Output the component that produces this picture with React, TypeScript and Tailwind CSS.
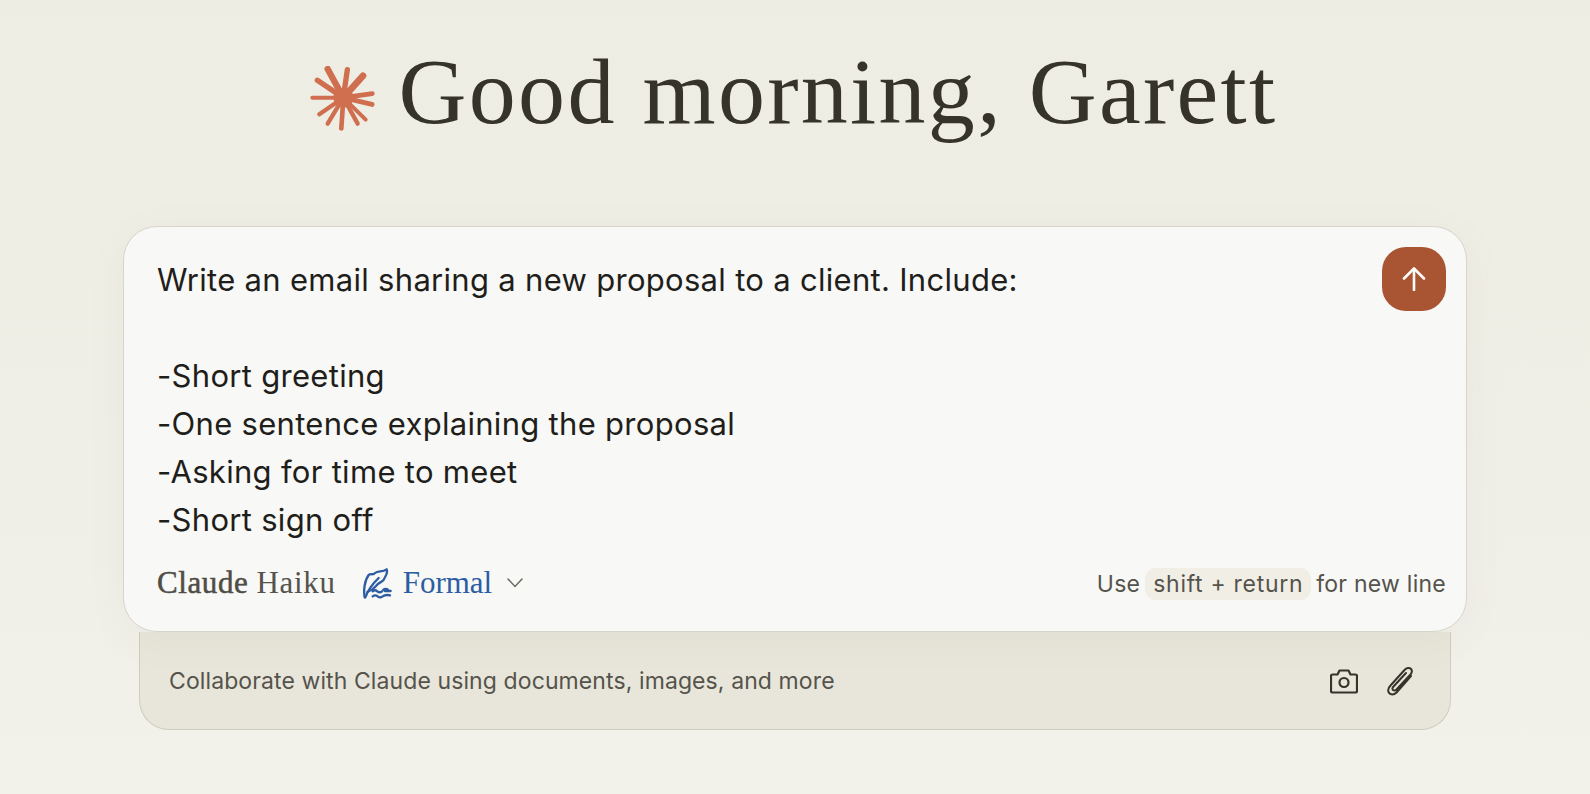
const LINES = [
  "Write an email sharing a new proposal to a client. Include:",
  "",
  "-Short greeting",
  "-One sentence explaining the proposal",
  "-Asking for time to meet",
  "-Short sign off",
];

// crop-space coordinates of the hand drawn burst, as tapered spokes
const RAYS: [number, number, number][] = [
  [78, 44, 19],
  [137, 46, 16],
  [184, 64, 20],
  [212, 118, 14],
  [211, 150, 15],
  [192, 196, 12],
  [168, 208, 13],
  [119, 222, 14],
  [78, 208, 13],
  [53, 180, 13],
  [32, 130, 12],
  [47, 78, 16],
];

function Burst() {
  return (
    <svg viewBox="25 35 195 195" className="mt-[27px] h-[65px] w-[65px] shrink-0" aria-hidden>
      {RAYS.map(([x, y, w]) => (
        <line key={`${x}-${y}`} x1="125" y1="130" x2={x} y2={y} stroke="#cf6f4f" strokeWidth={w} strokeLinecap="round" />
      ))}
      <circle cx="125" cy="130" r="30" fill="#cf6f4f" />
    </svg>
  );
}

function FormalIcon() {
  return (
    <svg viewBox="55 15 90 93" className="h-[31px] w-[30px] shrink-0" fill="none" stroke="#2c5da3" strokeWidth="7" strokeLinecap="round" strokeLinejoin="round" aria-hidden>
      <path d="M60 103C56 82 60 52 72 36C80 30 84 38 91 30C101 21 112 29 126 19C131 33 120 41 118 49C110 60 101 58 95 68C88 76 78 83 68 87" />
      <path d="M62 103C70 82 84 62 102 45" />
      <path d="M84 85q7 -6 14 0t14 0" />
      <path d="M116 80q7 -5 14 0 M120 84h18" />
      <path d="M84 100q8 -6 15 0t15 0t22 -3" />
    </svg>
  );
}

function CameraIcon() {
  return (
    <svg viewBox="0 0 28 25" className="h-[25px] w-[28px]" fill="none" stroke="#35332a" strokeWidth="2.2" strokeLinejoin="round" aria-hidden>
      <path d="M2.5 5.5H7.5L9.5 1.5H18.5L20.5 5.5H25.5Q27 5.5 27 7V22Q27 23.5 25.5 23.5H2.5Q1 23.5 1 22V7Q1 5.5 2.5 5.5Z" />
      <circle cx="14" cy="13.5" r="4.5" />
    </svg>
  );
}

function ClipIcon() {
  return (
    <svg viewBox="0 0 26 29" className="h-[29px] w-[26px]" fill="none" stroke="#35332a" strokeWidth="2" strokeLinecap="round" strokeLinejoin="round" aria-hidden>
      <path d="M24 9L9.5 25.5C7 28 3 28 1.8 25.5C0.5 23 1.5 20.5 3.5 18.5L17.5 3C19.5 0.8 22.5 0.5 24 2C25.5 3.5 25 6 23 8L9.5 22.5C8.5 23.5 7 23.8 6 23C5 22 5.5 20.5 6.5 19.5L19 6" />
    </svg>
  );
}

export default function App() {
  return (
    <div className="flex h-[794px] w-[1590px] flex-col items-center overflow-hidden bg-[#f1f0e8] bg-gradient-to-b from-[#eeede3] to-[#f2f1ea] font-['Inter',sans-serif]">
      <h1 className="mt-[39px] flex h-[104px] items-start gap-[24px] pr-[3px] font-['Liberation_Serif',serif] text-[94px] leading-[104px] tracking-[2.3px] text-[#35332a]">
        <Burst />
        <span>Good morning, Garett</span>
      </h1>

      <div className="relative z-10 mt-[83px] flex h-[406px] w-[1344px] flex-col rounded-[34px] border border-[#d6d5cb] bg-[#f8f8f6] pl-[33px] pr-[20px] shadow-[0_8px_40px_rgba(120,110,80,0.06)]">
        <div className="flex items-start justify-between">
          <div className="pt-[29px] text-[31px] leading-[48px] tracking-[0.3px] text-[#1f1e1b]">
            {LINES.map((line, i) => (
              <div key={i} className="h-[48px] whitespace-pre">
                {line}
              </div>
            ))}
          </div>
          <button className="mt-[20px] flex h-[64px] w-[64px] items-center justify-center rounded-[24px] bg-[#a95533]">
            <svg viewBox="0 0 24 24" className="h-[24px] w-[24px]" fill="none" stroke="#fdfcf9" strokeWidth="2.6" strokeLinecap="round" strokeLinejoin="round" aria-hidden>
              <path d="M12 23V2" />
              <path d="M2 11.5L12 1.5L22 11.5" />
            </svg>
          </button>
        </div>
        <div className="mt-[19px] flex items-center justify-between">
          <div className="flex items-center font-['Liberation_Serif',serif] text-[31px] leading-[40px]">
            <span className="tracking-[0.6px] text-[#4f4d46] [-webkit-text-stroke:0.5px_#4f4d46]">Claude</span>
            <span className="ml-[8px] tracking-[0.7px] text-[#55534c]">Haiku</span>
            <span className="ml-[27px]"><FormalIcon /></span>
            <span className="ml-[10px] text-[#2c5da3]">Formal</span>
            <svg viewBox="0 0 16 10" className="ml-[15px] h-[10px] w-[16px]" fill="none" stroke="#6b6960" strokeWidth="1.5" strokeLinecap="round" aria-hidden>
              <path d="M1 1L8 8.5L15 1" />
            </svg>
          </div>
          <div className="flex items-center pt-[2px] text-[23px] leading-[32px] tracking-[0.25px] text-[#55534c]">
            <span>Use</span>
            <span className="ml-[5px] rounded-[11px] bg-[#f0eee5] px-[8px] tracking-[0.7px]">shift + return</span>
            <span className="ml-[5px]">for new line</span>
          </div>
        </div>
      </div>

      <div className="flex h-[98px] w-[1312px] items-center justify-between rounded-b-[30px] border border-t-0 border-[#cfcdc0] bg-[#e8e6da] pl-[29px] pr-[37px] pt-[2px]">
        <span className="text-[23px] tracking-[0.1px] text-[#55534c]">Collaborate with Claude using documents, images, and more</span>
        <div className="flex items-center gap-[29px]">
          <CameraIcon />
          <ClipIcon />
        </div>
      </div>
    </div>
  );
}
